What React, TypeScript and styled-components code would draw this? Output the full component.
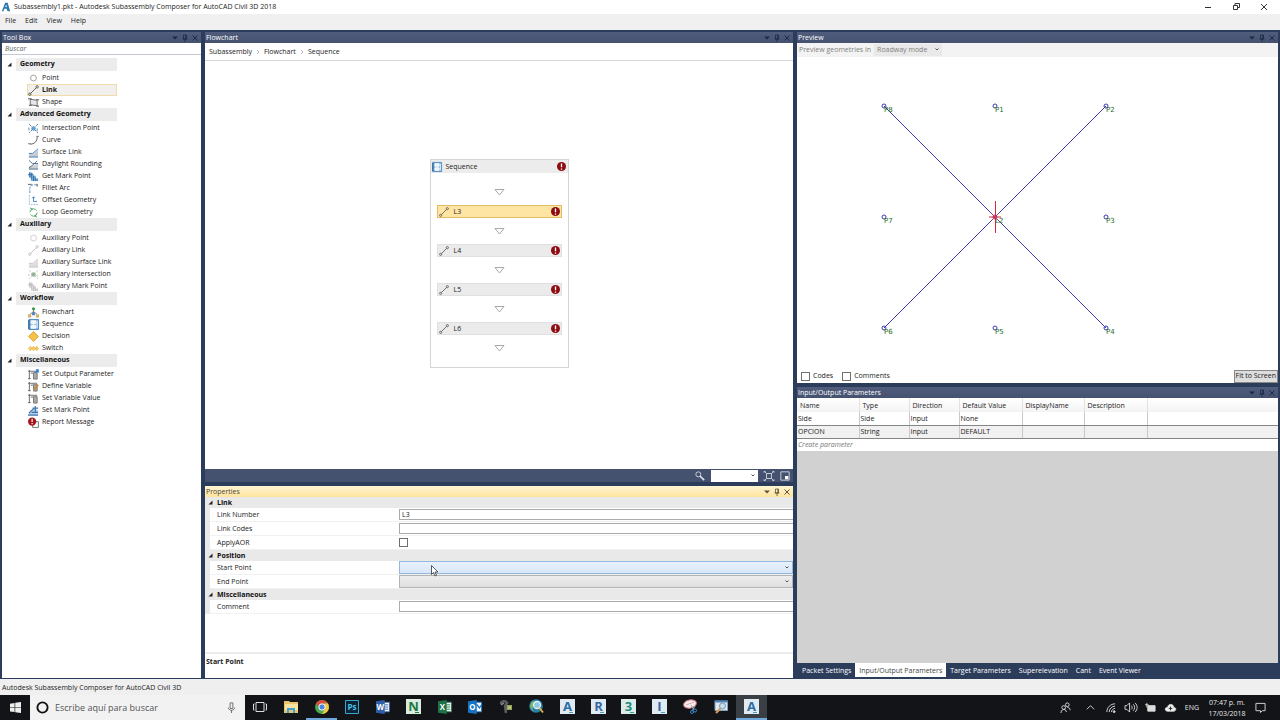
import React from "react";
import styled, { createGlobalStyle, css } from "styled-components";

const font = `"Open Sans", "Noto Sans", sans-serif`;

const Global = createGlobalStyle`
  * { box-sizing: border-box; }
  body { margin: 0; font: 7px/12px ${font}; color: #222; background: #f0f0f0; }
  button, input, select { font: inherit; color: inherit; margin: 0; padding: 0; border: 0; background: none; border-radius: 0; }
  svg { display: block; flex: none; overflow: visible; }
`;

const Page = styled.div`
  min-height: 100vh;
  display: flex;
  flex-direction: column;
`;

/* ---------- window frame ---------- */

const TitleBar = styled.header`
  display: flex;
  align-items: center;
  height: 14px;
  padding: 0 11px 0 1px;
  gap: 3px;
  background: #fff;
  color: #222;
`;
const WindowTitle = styled.h1`
  flex: 1;
  margin: 0;
  font: inherit;
`;
const WindowButtons = styled.div`
  display: flex;
  gap: 18px;
`;
const IconButton = styled.button`
  display: flex;
  align-items: center;
  justify-content: center;
`;
const MenuBar = styled.nav`
  display: flex;
  align-items: flex-start;
  gap: 9px;
  height: 16px;
  padding: 1px 5px 0;
  background: #f0f0f0;
`;
const StatusBar = styled.footer`
  height: 16px;
  padding: 3px 2px 1px;
  background: #f0eff0;
`;

/* ---------- docking area ---------- */

const Dock = styled.main`
  flex: 1;
  display: grid;
  grid-template-columns: 199px minmax(0, 588fr) minmax(0, 481fr);
  gap: 4px;
  padding: 2px 2px 1px;
  background: #2c3d5b;
`;
const CenterColumn = styled.div`
  display: grid;
  grid-template-rows: minmax(0, 451fr) minmax(191px, 192fr);
  gap: 4px;
`;
const RightColumn = styled.div`
  display: grid;
  grid-template-rows: minmax(0, 351fr) minmax(0, 291fr);
  gap: 4px;
`;
const Panel = styled.section`
  display: flex;
  flex-direction: column;
  min-width: 0;
  background: #fff;
`;
const PanelHead = styled.div<{ $active?: boolean }>`
  display: flex;
  align-items: center;
  justify-content: space-between;
  flex: none;
  height: 11px;
  padding: 0 2px 0 1px;
  color: ${(p) => (p.$active ? "#4a4633" : "#fff")};
  background: ${(p) => (p.$active ? "linear-gradient(#fff5d4, #ffe49c)" : "linear-gradient(#505d7d, #44516f)")};
`;
const PanelTitle = styled.h2`
  margin: 0;
  font: inherit;
`;
const PanelTools = styled.div<{ $active?: boolean }>`
  display: flex;
  gap: 2px;
  color: ${(p) => (p.$active ? "#5c5436" : "#1d2a45")};
`;

/* ---------- tool box ---------- */

const SearchBox = styled.input`
  flex: none;
  height: 12px;
  padding: 0 3px;
  border-bottom: 1px solid #c5c9d2;
  font-style: italic;
  outline: none;
  &::placeholder { color: #666; opacity: 1; }
`;
const Tree = styled.div`
  padding: 3px 0 0;
`;
const GroupHead = styled.button`
  display: grid;
  grid-template-columns: 14px 101px;
  align-items: center;
  height: 13px;
  margin-bottom: 1px;
  text-align: left;
  font-weight: 700;
  color: #111;
  svg { justify-self: center; }
`;
const GroupName = styled.span`
  height: 13px;
  padding-left: 4px;
  background: #ececec;
`;
const ToolList = styled.ul`
  list-style: none;
  margin: 0;
  padding: 0 0 0 25px;
`;
const Tool = styled.button<{ $selected?: boolean }>`
  display: flex;
  align-items: center;
  gap: 3px;
  width: 90px;
  height: 12px;
  border: 1px solid transparent;
  white-space: nowrap;
  ${(p) =>
    p.$selected &&
    css`
      font-weight: 700;
      background: #f2f0ec;
      border-color: #f0dca8;
    `}
`;

/* ---------- flowchart ---------- */

const Breadcrumbs = styled.nav`
  display: flex;
  align-items: center;
  flex: none;
  gap: 4px;
  height: 18px;
  padding: 1px 4px 0;
  border-bottom: 1px solid #d8d8d8;
`;
const PlainLink = styled.a`
  color: inherit;
  text-decoration: none;
`;
const Canvas = styled.div`
  flex: 1;
  display: flex;
  justify-content: center;
  align-items: flex-start;
  padding-top: 98px;
`;
const SequenceBox = styled.div`
  width: 139px;
  border: 1px solid #d4d4d6;
`;
const SequenceHead = styled.div`
  display: flex;
  align-items: center;
  gap: 4px;
  height: 13px;
  padding: 0 2px 0 1px;
  line-height: 10px;
  background: #ececec;
`;
const SequenceBody = styled.div`
  padding: 6px;
`;
const Activity = styled.button<{ $selected?: boolean }>`
  display: flex;
  align-items: center;
  gap: 5px;
  width: 100%;
  height: 13px;
  padding: 0 1px;
  text-align: left;
  background: ${(p) => (p.$selected ? "#ffe5a3" : "#ebebeb")};
  border: 1px solid ${(p) => (p.$selected ? "#e3bd66" : "#e0e0e4")};
`;
const Grow = styled.span`
  flex: 1;
`;
const Gap = styled.div`
  display: flex;
  align-items: center;
  justify-content: center;
  height: 26px;
`;
const CanvasTools = styled.div`
  display: flex;
  align-items: center;
  justify-content: flex-end;
  flex: none;
  gap: 6px;
  height: 13px;
  padding-right: 3px;
  background: #44516f;
`;

/* ---------- form parts ---------- */

const SelectFrame = styled.div<{ $kind: "zoom" | "hover" | "plain" | "flat" }>`
  position: relative;
  height: 13px;
  ${(p) => p.$kind === "zoom" && "width: 47px; height: 12px; background: #fff;"}
  ${(p) => p.$kind === "hover" && "background: linear-gradient(#e8f1fc, #d8e7f8); border: 1px solid #93b8de;"}
  ${(p) => p.$kind === "plain" && "background: linear-gradient(#ededed, #e0e0e0); border: 1px solid #b4b4b4;"}
  ${(p) => p.$kind === "flat" && "width: 68px; height: 12px; background: #e9e9e9;"}
`;
const Select = styled.select`
  display: block;
  width: 100%;
  height: 100%;
  padding: 0 3px;
  appearance: none;
  outline: none;
`;
const SelectArrow = styled.svg`
  position: absolute;
  right: 2px;
  top: 3px;
  pointer-events: none;
`;
const Pointer = styled.svg`
  position: absolute;
  left: 31px;
  top: 3px;
  z-index: 2;
`;
const CheckBox = styled.input`
  appearance: none;
  flex: none;
  width: 9px;
  height: 9px;
  border: 1px solid #707070;
  background: #fff;
`;

/* ---------- properties ---------- */

const PropertyList = styled.div`
  border-left: 5px solid #e9e9e9;
`;
const PropertyGroup = styled.h3`
  display: flex;
  align-items: center;
  gap: 4px;
  height: 11px;
  margin: 0 0 0 -2px;
  font: inherit;
  font-weight: 700;
  color: #111;
  background: #e9e9e9;
`;
const PropertyRow = styled.div`
  display: grid;
  grid-template-columns: 182px 1fr;
  align-items: center;
  height: 14px;
  padding-left: 7px;
  border-bottom: 1px solid #f1f1f1;
`;
const TextBox = styled.input`
  width: 100%;
  height: 11px;
  padding: 0 2px;
  border: 1px solid #ababab;
  border-right: 0;
`;
const HelpText = styled.div`
  margin-top: auto;
  height: 26px;
  padding: 2px 1px;
  border-top: 2px solid #ececec;
  font-weight: 700;
  color: #222;
`;

/* ---------- preview ---------- */

const PreviewBar = styled.div`
  display: flex;
  align-items: center;
  flex: none;
  gap: 3px;
  height: 14px;
  padding-left: 2px;
  color: #808080;
  background: #f3f3f3;
`;
const PreviewCanvas = styled.svg`
  flex: 1 1 0;
  width: 100%;
  min-height: 0;
`;
const PreviewFoot = styled.div`
  display: flex;
  align-items: center;
  flex: none;
  gap: 9px;
  height: 14px;
  padding-left: 4px;
`;
const CheckLabel = styled.label`
  display: flex;
  align-items: center;
  gap: 3px;
`;
const FitButton = styled.button`
  height: 13px;
  margin-left: auto;
  padding: 0 1px;
  line-height: 10px;
  background: #ddd;
  border: 1px solid #888;
`;

/* ---------- parameters ---------- */

const ParamPanel = styled(Panel)`
  background: #d1d1d1;
`;
const ParamTable = styled.table`
  width: 100%;
  border-collapse: collapse;
  table-layout: fixed;
  background: #fff;
  th, td {
    height: 13px;
    padding: 0 1px;
    line-height: 11px;
    font-weight: 400;
    text-align: left;
    border-right: 1px solid #c9c9c9;
  }
  th { height: 14px; padding: 0 3px; border-color: #e2e2e2; background: linear-gradient(#fff, #f3f3f3); }
  td { border-bottom: 1px solid #858585; }
  tr:nth-child(2) td { background: #f1f1f1; }
  th:last-child, td:last-child { border-right: 0; }
`;
const CreateParam = styled.input`
  flex: none;
  height: 12px;
  padding: 0 1px;
  background: #fff;
  font-style: italic;
  &::placeholder { color: #777; opacity: 1; }
`;
const Tabs = styled.div`
  display: flex;
  margin-top: auto;
  height: 15px;
  padding: 0 1px;
  background: #2c3d5b;
`;
const Tab = styled.button<{ $active?: boolean }>`
  height: 14px;
  padding: 1px 4px 0;
  white-space: nowrap;
  color: ${(p) => (p.$active ? "#444" : "#fff")};
  background: ${(p) => (p.$active ? "#fff" : "transparent")};
`;

/* ---------- task bar ---------- */

const TaskBar = styled.div`
  display: flex;
  height: 25px;
  color: #e8e8e8;
  background: #121417;
`;
const StartButton = styled(IconButton)`
  width: 30px;
`;
const TaskSearch = styled.label`
  display: flex;
  align-items: center;
  gap: 6px;
  width: 215px;
  padding: 0 8px 0 6px;
  background: #f2f2f2;
`;
const TaskInput = styled.input`
  flex: 1;
  min-width: 0;
  font-size: 9px;
  &::placeholder { color: #555; opacity: 1; }
`;
const Apps = styled.div`
  display: grid;
  grid-template-columns: repeat(17, 1fr);
  width: 522px;
`;
const AppButton = styled(IconButton)<{ $state?: "open" | "active" }>`
  border-bottom: 2px solid ${(p) => (p.$state ? "#6fa8dc" : "transparent")};
  background: ${(p) => (p.$state === "active" ? "#3a3f46" : "none")};
`;
const Tray = styled.div`
  display: flex;
  align-items: center;
  gap: 9px;
  margin-left: auto;
  padding-right: 14px;
  & > :first-child { margin-right: 5px; }
`;
const Clock = styled.div`
  line-height: 11px;
  width: 38px;
  text-align: center;
  white-space: nowrap;
`;

/* ---------- drawings ---------- */

type IconProps = { children: React.ReactNode; size?: number; box?: number };
const Icon = ({ children, size = 11, box = 12 }: IconProps) => (
  <svg width={size} height={size} viewBox={`0 0 ${box} ${box}`} fill="none" strokeWidth="1" aria-hidden="true">
    {children}
  </svg>
);

const linkIcon = (c: string) => (
  <g stroke={c}>
    <path d="M3 9 9 3" />
    <circle cx="2" cy="10" r="1.3" />
    <circle cx="10" cy="2" r="1.3" />
  </g>
);
const intersection = (a: string, b: string) => (
  <>
    <path d="M1 1 11 11M11 1 1 11" stroke={a} strokeDasharray="3 1" />
    <circle cx="6" cy="6" r="2" fill={b} stroke={b} />
    <path d="M1 5v3M10 6v3" stroke={a} />
  </>
);
const surface = (a: string, b: string) => (
  <>
    <path d="M1 11V8l5-1 5-4v8z" fill={b} />
    <path d="M1 7h4l6-5M1 11h10" stroke={a} />
  </>
);
const markPoint = (a: string, b: string) => (
  <>
    <path d="M1 2h4v3h3v3h3v3H3V7H1z" fill={b} />
    <path d="M2 1v6M4 2v7M0 4h6M6 5v6M8 6v5M10 9v2" stroke={a} />
  </>
);
const variable = (accent: React.ReactNode) => (
  <>
    <path d="M1.500 1v10M0 2.500h10M0 10.500h3M3 4.500h3" stroke="#666" />
    <path d="M6 4h4v7H6z" fill="#aaa" stroke="#777" />
    {accent}
  </>
);
const sequenceIcon = (
  <>
    <path d="M1 .5h10.500v11H1z" fill="#7fb0dc" stroke="#4a86bd" />
    <path d="M3.500 2h5v3h-5zM3.500 7h5v3h-5z" fill="#e9f4fc" stroke="#fff" />
    <path d="M6 5v2M10 2v8" stroke="#fff" />
    <path d="M1 1v10" stroke="#2f689c" strokeWidth="1.500" />
  </>
);

const toolIcons: Record<string, React.ReactNode> = {
  Point: <circle cx="6" cy="5.500" r="3.200" stroke="#999" />,
  Link: linkIcon("#555"),
  Shape: (
    <>
      <path d="M2.500 2.500 10 3.500v6L2.500 8.500z" fill="#e8e8e8" stroke="#666" />
      <path d="M0 2h4M9 10h3M1 9h3M9 3h3" stroke="#444" />
    </>
  ),
  "Intersection Point": intersection("#5d7f9c", "#5ca0d0"),
  Curve: (
    <>
      <path d="M2 10c5 0 8-3 8-8" stroke="#555" />
      <path d="M0 9.500h3M9 1.500h3" stroke="#777" />
    </>
  ),
  "Surface Link": surface("#3b78b0", "#c5cbd2"),
  "Daylight Rounding": (
    <>
      <path d="M1 11V8l5-1 5-2v6z" fill="#ccd1d6" />
      <path d="M1 1.500 5 5h6M1 10l5-4 4-4M1 11h10" stroke="#456684" />
    </>
  ),
  "Get Mark Point": markPoint("#2f6cab", "#83b1dc"),
  "Fillet Arc": (
    <>
      <path d="M2 11V6c0-3 2-4 5-4h4" stroke="#4d88bd" strokeDasharray="3 1" />
      <path d="M0 1.500h4M10 1v3" stroke="#555" />
    </>
  ),
  "Offset Geometry": (
    <>
      <path d="M1.500 0v10.500H12" stroke="#9bb6cf" strokeDasharray="2 1" />
      <path d="M6 2v5h4M4.500 3.500 6 2l1.500 1.500" stroke="#3f7fba" />
    </>
  ),
  "Loop Geometry": (
    <>
      <circle cx="6" cy="6" r="4" stroke="#55a868" strokeDasharray="10 2.500" />
      <path d="M2 1l3 1-2 2M10 11 7 10l2-2" stroke="#55a868" />
    </>
  ),
  "Auxiliary Point": <circle cx="6" cy="5.500" r="3.200" stroke="#ccc" />,
  "Auxiliary Link": linkIcon("#c0c0c0"),
  "Auxiliary Surface Link": surface("#c4c4c4", "#dedede"),
  "Auxiliary Intersection": intersection("#c4ccc4", "#94b294"),
  "Auxiliary Mark Point": markPoint("#bbb", "#ddd"),
  Flowchart: (
    <>
      <path d="M6 3v4M6 5 2 8M6 5l4 3" stroke="#777" />
      <circle cx="6" cy="2" r="1.700" fill="#3b9a4a" />
      <path d="M4.500 6h3v3h-3z" fill="#467fc5" />
      <path d="M0 8h3.500v3.500H0zM8.500 8H12v3.500H8.500z" fill="#d4b26a" />
    </>
  ),
  Sequence: sequenceIcon,
  Decision: <path d="M6 .5 11.500 6 6 11.500.5 6z" fill="#f3c04b" stroke="#dca532" />,
  Switch: (
    <path d="M2.500 3.500 4.500 6l-2 2.500L.5 6zM6 3.500 8 6 6 8.500 4 6zM9.500 3.500l2 2.500-2 2.500-2-2.500z" fill="#f5d06c" stroke="#dfae3f" strokeWidth=".7" />
  ),
  "Set Output Parameter": variable(<path d="M8 4l3-3M8.500 1H11v3" stroke="#2f7fd0" strokeWidth="1.500" />),
  "Define Variable": variable(<path d="M6 10l5-6" stroke="#c08a3a" strokeWidth="2" />),
  "Set Variable Value": variable(null),
  "Set Mark Point": (
    <>
      <path d="M0 11h11V6L7 3z" fill="#b9cbe0" />
      <path d="M1 9l5-5M0 11h11M5 3.500h6M8 1v7M4 8h7" stroke="#3c76b3" strokeWidth="1.300" />
    </>
  ),
  "Report Message": (
    <>
      <path d="M5 5h6.500v6.500H5z" fill="#eee" stroke="#777" />
      <circle cx="4.500" cy="5" r="4.500" fill="#a3141c" />
      <path d="M4.500 2v3.500M4.500 6.500V8M7 9h3" stroke="#fff" strokeWidth="1.300" />
    </>
  ),
};

const ErrorMark = () => (
  <Icon size={9}>
    <circle cx="6" cy="6" r="6" fill="#8e0b12" />
    <path d="M6 2v5M6 8.500v1.700" stroke="#fff" strokeWidth="1.800" />
  </Icon>
);
const Triangle = () => (
  <svg width="11" height="7" viewBox="0 0 11 7" fill="none" aria-hidden="true">
    <path d="M1 .5h9L5.500 6z" stroke="#a8a8a8" />
  </svg>
);
const Expander = () => (
  <svg width="5" height="5" viewBox="0 0 5 5" aria-hidden="true">
    <path d="M4.500 .5v4h-4z" fill="#222" />
  </svg>
);
const arrowPath = <path d="M1.500 1.500 3 3l1.500-1.500" fill="none" stroke="#555" />;
const Drop = ({ label, kind, children }: { label: string; kind: "zoom" | "hover" | "plain" | "flat"; children?: React.ReactNode }) => (
  <SelectFrame $kind={kind}>
    <Select aria-label={label}>{kind === "flat" ? <option>Roadway mode</option> : <option aria-label="None" />}</Select>
    <SelectArrow width="6" height="5" viewBox="0 0 6 5" aria-hidden="true">{arrowPath}</SelectArrow>
    {children}
  </SelectFrame>
);

const Head = ({ title, active }: { title: string; active?: boolean }) => (
  <PanelHead $active={active}>
    <PanelTitle>{title}</PanelTitle>
    <PanelTools $active={active}>
      <IconButton aria-label="Window options">
        <Icon size={8} box={8}><path d="M1 2.500h6L4 5.500z" fill="currentColor" /></Icon>
      </IconButton>
      <IconButton aria-label="Pin">
        <Icon size={8} box={8}><path d="M2.500 1h3v4h-3zM1.500 5h5M4 5v3M4.800 1v4" stroke="currentColor" strokeWidth=".8" /></Icon>
      </IconButton>
      <IconButton aria-label="Close">
        <Icon size={8} box={8}><path d="M1.500 1.500l5 5M6.500 1.500l-5 5" stroke="currentColor" /></Icon>
      </IconButton>
    </PanelTools>
  </PanelHead>
);

/* ---------- data ---------- */

const groups = [
  { name: "Geometry", tools: ["Point", "Link", "Shape"] },
  {
    name: "Advanced Geometry",
    tools: ["Intersection Point", "Curve", "Surface Link", "Daylight Rounding", "Get Mark Point", "Fillet Arc", "Offset Geometry", "Loop Geometry"],
  },
  { name: "Auxiliary", tools: ["Auxiliary Point", "Auxiliary Link", "Auxiliary Surface Link", "Auxiliary Intersection", "Auxiliary Mark Point"] },
  { name: "Workflow", tools: ["Flowchart", "Sequence", "Decision", "Switch"] },
  { name: "Miscellaneous", tools: ["Set Output Parameter", "Define Variable", "Set Variable Value", "Set Mark Point", "Report Message"] },
];

const points: [string, number, number][] = [
  ["P8", 87, 49], ["P1", 198, 49], ["P2", 309, 49],
  ["P7", 87, 160], ["L2", 198, 160], ["P3", 309, 160],
  ["P6", 87, 271], ["P5", 198, 271], ["P4", 309, 271],
];

const columns: [string, number | undefined][] = [
  ["Name", 62], ["Type", 50], ["Direction", 50], ["Default Value", 63], ["DisplayName", 62], ["Description", 63], ["", undefined],
];
const params = [
  ["Side", "Side", "Input", "None", "", "", ""],
  ["OPCION", "String", "Input", "DEFAULT", "", "", ""],
];

const letterTile = (letter: string, fill: string, bg = "#dfeaf3", accent = "#4f9cc0") => (
  <Icon size={15} box={15}>
    <path d="M0 0h15v15H0z" fill={bg} />
    <text x="7.500" y="12" textAnchor="middle" fontSize="13" fontWeight="700" fontFamily={font} fill={fill}>{letter}</text>
    <path d="M9 13.500h4" stroke={accent} />
  </Icon>
);
const office = (letter: string, fill: string, mail?: boolean) => (
  <Icon size={14} box={16}>
    <path d="M8 2.500h7.500v11H8z" fill="#f4f6f8" stroke={fill} />
    {mail ? <path d="M10 5l3 4 3-4" stroke={fill} strokeWidth="1.500" /> : <path d="M10 5.500h4M10 8h4M10 10.500h4" stroke={fill} />}
    <path d="M0 1.500 10 0v16L0 14.500z" fill={fill} />
    <text x="5" y="11.500" textAnchor="middle" fontSize="9" fontWeight="700" fontFamily={font} fill="#fff">{letter}</text>
  </Icon>
);

const apps: { name: string; icon: React.ReactNode; state?: "open" | "active" }[] = [
  { name: "Task view", icon: <Icon size={14} box={14}><path d="M3 2.500h8v9H3zM1.500 4H.5v6h1M12.500 4h1v6h-1" stroke="#ddd" /></Icon> },
  {
    name: "File Explorer",
    icon: (
      <Icon size={14} box={14}>
        <path d="M0 1h5l1 1h8v11H0z" fill="#e9c46a" />
        <path d="M1 4h13v6H1z" fill="#f9e3a0" />
        <path d="M3 13V8h8v5H9v-3H5v3z" fill="#3da2d8" />
      </Icon>
    ),
  },
  {
    name: "Chrome",
    state: "open",
    icon: (
      <Icon size={14} box={14}>
        <circle cx="7" cy="7" r="7" fill="#4aa853" />
        <path d="M1 3.500a7 7 0 0 1 12 0H7L5 9z" fill="#dc4a3d" />
        <path d="M13 3.500A7 7 0 0 1 7 14l3-5-1-5.500z" fill="#f6c73b" />
        <circle cx="7" cy="7" r="3.200" fill="#4a86e0" stroke="#fff" />
      </Icon>
    ),
  },
  {
    name: "Photoshop",
    icon: (
      <Icon size={14} box={14}>
        <path d="M.5 .5h13v13H.5z" fill="#0c2536" stroke="#3aa6cf" />
        <text x="7" y="10" textAnchor="middle" fontSize="8" fontWeight="700" fontFamily={font} fill="#4ec3ea">Ps</text>
      </Icon>
    ),
  },
  { name: "Word", icon: office("W", "#2f5fa8") },
  { name: "Navisworks", icon: letterTile("N", "#1b7a43", "#dcebe0", "#1b7a43") },
  { name: "Excel", icon: office("X", "#1f7246") },
  { name: "Outlook", icon: office("O", "#1673c4", true) },
  {
    name: "Tools",
    icon: (
      <Icon size={14} box={14}>
        <path d="M2 4c0-3 5-4 6-1l-2 3 1 7" stroke="#5c5f62" strokeWidth="2.500" />
        <path d="M2 5l3-2" stroke="#8d9092" strokeWidth="1.500" />
        <path d="M7.500 5H13v5H7.500z" fill="#94a35a" />
        <path d="M9 6.500h3v2H9z" fill="#c2cc90" />
      </Icon>
    ),
  },
  {
    name: "Map search",
    icon: (
      <Icon size={15} box={15}>
        <circle cx="7" cy="7" r="6.800" fill="#2a7fa6" />
        <path d="M1.500 5c2-4 5-3 4 0s-3 3-1 7c-2-1-4-4-3-7z" fill="#79b96a" />
        <circle cx="8" cy="6" r="3.500" fill="#8cc8e2" stroke="#e2eef3" strokeWidth="1.300" />
        <path d="M10.500 9l3.500 4.500" stroke="#dba94c" strokeWidth="2" />
      </Icon>
    ),
  },
  { name: "AutoCAD", icon: letterTile("A", "#2d6ca4") },
  { name: "Revit", icon: letterTile("R", "#35699f") },
  { name: "3ds Max", icon: letterTile("3", "#1f8a80", "#dcece8", "#3aa18f") },
  { name: "InfraWorks", icon: letterTile("I", "#3b63a6") },
  {
    name: "Snipping Tool",
    icon: (
      <Icon size={15} box={15}>
        <ellipse cx="7" cy="5" rx="6.500" ry="4" transform="rotate(-12 7 5)" fill="#f7ecee" stroke="#c9737d" />
        <path d="M3 6l8-3" stroke="#d9a6ac" />
        <path d="M8 6l3 5M12 7l-3 5" stroke="#8fa4b5" />
        <circle cx="12" cy="11.500" r="1.600" stroke="#3a86c8" />
        <circle cx="9" cy="13" r="1.500" stroke="#3a86c8" />
      </Icon>
    ),
  },
  {
    name: "Viewer",
    icon: (
      <Icon size={14} box={14}>
        <path d="M1 1h12.500v9.500H1z" fill="#dfe8f0" stroke="#7fa3c4" />
        <path d="M.5 .5h13.500v2H.5z" fill="#4a83b8" />
        <circle cx="8.500" cy="6" r="3" fill="#c4dfee" stroke="#88979f" />
        <path d="M6.500 8.500 2 13" stroke="#d09a5c" strokeWidth="2.200" />
      </Icon>
    ),
  },
  { name: "Subassembly Composer", state: "active", icon: letterTile("A", "#2d6ca4") },
];

const trayIcons: [string, React.ReactNode][] = [
  ["People", <><circle cx="8" cy="3" r="2" /><circle cx="4" cy="6" r="2" /><path d="M1 12c0-5 6-5 6-1M8 6c3 0 3 2 3 3" /></>],
  ["Show hidden icons", <path d="M2 8l4-4 4 4" />],
  ["Network", <><path d="M2 11C2 6 6 2 11 2M4.500 11c0-3 3-6.500 6.500-6.500M7 11c0-2 2-4 4-4" /><circle cx="10" cy="10.500" r="1" fill="#ddd" /></>],
  ["Volume", <><path d="M0 4h2l3-3v10L2 8H0zM7 4c1 1 1 3 0 4M9 2.500c2 2 2 5 0 7M11 1c3 3 3 7 0 10" /></>],
  ["Battery", <><path d="M3 4h8v6H3z" fill="#ddd" /><path d="M0 3h4M2 1v5" /></>],
  ["Cloud", <><path d="M3 10C-1 10 0 5 3 6c0-5 7-4 6.500 0C13 6 12 10 9.500 10z" fill="#eee" /><path d="M6 5v4M4 7h4" stroke="#222" /></>],
];

/* ---------- page ---------- */

export default function App() {
  return (
    <Page>
      <Global />
      <TitleBar>
        <Icon size={10}>
          <path d="M1 11 5 1h3l3 10H8L6.500 8H4l-1 3z" fill="#2b79ad" />
          <path d="M5 6 6.200 3 7 6z" fill="#fff" />
        </Icon>
        <WindowTitle>Subassembly1.pkt - Autodesk Subassembly Composer for AutoCAD Civil 3D 2018</WindowTitle>
        <WindowButtons>
          <IconButton aria-label="Minimize"><Icon size={10} box={10}><path d="M2 5.500h6" stroke="#333" /></Icon></IconButton>
          <IconButton aria-label="Restore"><Icon size={10} box={10}><path d="M2.500 3.500h4v4h-4zM4 3V1.500h4.500v4H7" stroke="#333" /></Icon></IconButton>
          <IconButton aria-label="Close window"><Icon size={10} box={10}><path d="M2 2l6 6M8 2 2 8" stroke="#333" /></Icon></IconButton>
        </WindowButtons>
      </TitleBar>
      <MenuBar>
        {["File", "Edit", "View", "Help"].map((m) => <button key={m}>{m}</button>)}
      </MenuBar>

      <Dock>
        <Panel>
          <Head title="Tool Box" />
          <SearchBox placeholder="Buscar" aria-label="Buscar" />
          <Tree>
            {groups.map((g) => (
              <div key={g.name}>
                <GroupHead><Expander /><GroupName>{g.name}</GroupName></GroupHead>
                <ToolList>
                  {g.tools.map((t) => (
                    <li key={t}>
                      <Tool $selected={t === "Link"}><Icon>{toolIcons[t]}</Icon>{t}</Tool>
                    </li>
                  ))}
                </ToolList>
              </div>
            ))}
          </Tree>
        </Panel>

        <CenterColumn>
          <Panel>
            <Head title="Flowchart" />
            <Breadcrumbs>
              {["Subassembly", "Flowchart", "Sequence"].map((b, i) => (
                <React.Fragment key={b}>
                  {i > 0 && <Icon size={4} box={4}><path d="M1 0l2 2-2 2" stroke="#999" strokeWidth=".7" /></Icon>}
                  <PlainLink href="#">{b}</PlainLink>
                </React.Fragment>
              ))}
            </Breadcrumbs>
            <Canvas>
              <SequenceBox>
                <SequenceHead><Icon size={10}>{sequenceIcon}</Icon>Sequence<Grow /><ErrorMark /></SequenceHead>
                <SequenceBody>
                  <Gap><Triangle /></Gap>
                  {["L3", "L4", "L5", "L6"].map((l) => (
                    <React.Fragment key={l}>
                      <Activity $selected={l === "L3"}><Icon size={10}>{linkIcon("#555")}</Icon>{l}<Grow /><ErrorMark /></Activity>
                      <Gap><Triangle /></Gap>
                    </React.Fragment>
                  ))}
                </SequenceBody>
              </SequenceBox>
            </Canvas>
            <CanvasTools>
              <IconButton aria-label="Reset zoom">
                <Icon size={10}><circle cx="4" cy="4" r="3" stroke="#dde2ec" /><path d="M6 6l5 5" stroke="#dde2ec" strokeWidth="2" /></Icon>
              </IconButton>
              <Drop label="Zoom" kind="zoom" />
              <IconButton aria-label="Fit to screen">
                <Icon size={10}><path d="M3 3h6v6H3zM1 1l2 2M11 1 9 3M11 11 9 9M1 11l2-2M0 2V.5h2M10 .5h2V2M12 10v1.500h-2M2 11.500H0V10" stroke="#dde2ec" /></Icon>
              </IconButton>
              <IconButton aria-label="Overview">
                <Icon size={10}><path d="M1 1h10v10H1z" stroke="#dde2ec" /><path d="M6 6h4v4H6z" fill="#fff" /></Icon>
              </IconButton>
            </CanvasTools>
          </Panel>

          <Panel>
            <Head title="Properties" active />
            <PropertyList>
              <PropertyGroup><Expander />Link</PropertyGroup>
              <PropertyRow><label htmlFor="num">Link Number</label><TextBox id="num" defaultValue="L3" /></PropertyRow>
              <PropertyRow><label htmlFor="codes">Link Codes</label><TextBox id="codes" /></PropertyRow>
              <PropertyRow><label htmlFor="aor">ApplyAOR</label><CheckBox id="aor" type="checkbox" /></PropertyRow>
              <PropertyGroup><Expander />Position</PropertyGroup>
              <PropertyRow>
                <span>Start Point</span>
                <Drop label="Start Point" kind="hover">
                  <Pointer width="8" height="12" viewBox="0 0 8 12" aria-hidden="true">
                    <path d="M.5 .5v9l2-2 1.500 3.500 1.500-.7L4 7h3z" fill="#fff" stroke="#333" strokeWidth=".8" />
                  </Pointer>
                </Drop>
              </PropertyRow>
              <PropertyRow><span>End Point</span><Drop label="End Point" kind="plain" /></PropertyRow>
              <PropertyGroup><Expander />Miscellaneous</PropertyGroup>
              <PropertyRow><label htmlFor="comment">Comment</label><TextBox id="comment" /></PropertyRow>
            </PropertyList>
            <HelpText>Start Point</HelpText>
          </Panel>
        </CenterColumn>

        <RightColumn>
          <Panel>
            <Head title="Preview" />
            <PreviewBar>Preview geometries in <Drop label="Preview mode" kind="flat" /></PreviewBar>
            <PreviewCanvas viewBox="0 0 481 312" role="img" aria-label="Geometry preview">
              <path d="M87 49 309 271M309 49 87 271" stroke="#3a3ab8" fill="none" />
              {points.map(([name, x, y]) => (
                <g key={name}>
                  <circle cx={x} cy={y} r="2" fill="none" stroke="#3a3ab8" />
                  <text x={x} y={y + 6} fontSize="7" fontFamily={`"DejaVu Sans", sans-serif`} fill="#1d6a1d">{name}</text>
                </g>
              ))}
              <path d="M198.500 144v32M192 160h12M194.500 156.500l7 7M201.500 156.500l-7 7" stroke="#d8283c" />
            </PreviewCanvas>
            <PreviewFoot>
              <CheckLabel><CheckBox type="checkbox" />Codes</CheckLabel>
              <CheckLabel><CheckBox type="checkbox" />Comments</CheckLabel>
              <FitButton>Fit to Screen</FitButton>
            </PreviewFoot>
          </Panel>

          <ParamPanel>
            <Head title="Input/Output Parameters" />
            <ParamTable>
              <colgroup>{columns.map(([c, w]) => <col key={c} width={w} />)}</colgroup>
              <thead><tr>{columns.map(([c]) => <th key={c}>{c}</th>)}</tr></thead>
              <tbody>
                {params.map((r) => <tr key={r[0]}>{r.map((c, i) => <td key={i}>{c}</td>)}</tr>)}
              </tbody>
            </ParamTable>
            <CreateParam placeholder="Create parameter" aria-label="Create parameter" />
            <Tabs>
              {["Packet Settings", "Input/Output Parameters", "Target Parameters", "Superelevation", "Cant", "Event Viewer"].map((t) => (
                <Tab key={t} $active={t === "Input/Output Parameters"}>{t}</Tab>
              ))}
            </Tabs>
          </ParamPanel>
        </RightColumn>
      </Dock>

      <StatusBar>Autodesk Subassembly Composer for AutoCAD Civil 3D</StatusBar>

      <TaskBar>
        <StartButton aria-label="Start">
          <Icon size={11}><path d="M0 2l5-1v4.700H0zM5.700 .8 12 0v5.700H5.700zM0 6.400h5V11L0 10.300zM5.700 6.400H12V12l-6.300-.9z" fill="#eee" /></Icon>
        </StartButton>
        <TaskSearch>
          <Icon size={13} box={14}><circle cx="7" cy="7" r="5.500" stroke="#111" strokeWidth="2" /></Icon>
          <TaskInput placeholder="Escribe aquí para buscar" aria-label="Escribe aquí para buscar" />
          <Icon size={11}><path d="M4.500 1h3v6h-3zM2.500 6c0 4 7 4 7 0M6 9v3" stroke="#666" /></Icon>
        </TaskSearch>
        <Apps>
          {apps.map((a) => <AppButton key={a.name} aria-label={a.name} $state={a.state}>{a.icon}</AppButton>)}
        </Apps>
        <Tray>
          {trayIcons.map(([name, art]) => (
            <IconButton key={name} aria-label={name}><Icon><g stroke="#ddd">{art}</g></Icon></IconButton>
          ))}
          <span>ENG</span>
          <Clock>07:47 p. m.<br />17/03/2018</Clock>
          <IconButton aria-label="Notifications">
            <Icon><path d="M1 1.500h10v8H8L6 11.500V9.500H1z" stroke="#ddd" /></Icon>
          </IconButton>
        </Tray>
      </TaskBar>
    </Page>
  );
}
